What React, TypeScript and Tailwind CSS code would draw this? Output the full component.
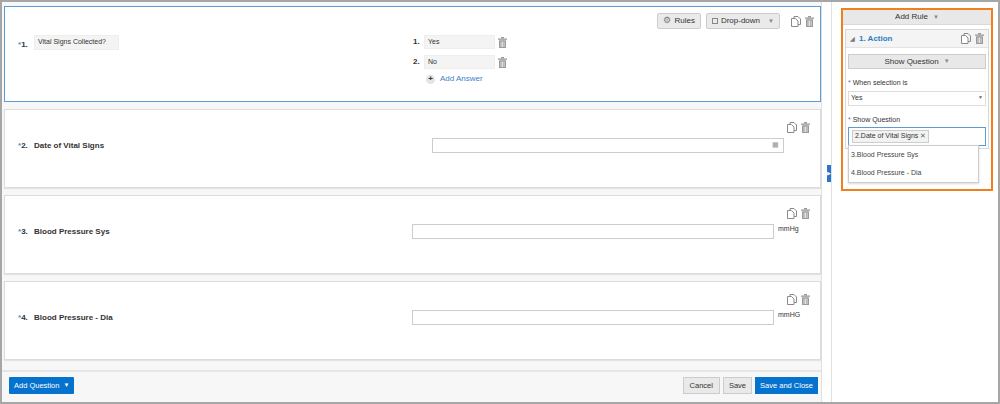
import React from "react";

const F = { fontFamily: "'Liberation Sans', Arial, sans-serif" };

function Trash({ c = "#9a9a9a" }: { c?: string }) {
  return (
    <svg width="9" height="11" viewBox="0 0 9 11">
      <rect x="0" y="1.5" width="9" height="1.3" fill={c} />
      <rect x="3" y="0" width="3" height="1.5" fill={c} />
      <rect x="1" y="3.3" width="7" height="7.7" rx="0.5" fill={c} />
      <rect x="2.7" y="4.5" width="0.7" height="5.5" fill="#fff" />
      <rect x="4.2" y="4.5" width="0.7" height="5.5" fill="#fff" />
      <rect x="5.7" y="4.5" width="0.7" height="5.5" fill="#fff" />
    </svg>
  );
}
function Copy() {
  return (
    <svg width="10" height="11" viewBox="0 0 10 11" fill="none" stroke="#8a8a8a" strokeWidth="1">
      <path d="M3 2.5V0.5h4l2.5 2.5v5.5H7" />
      <path d="M0.5 2.5h4l2.5 2.5v5.5H0.5z" fill="#fff" />
    </svg>
  );
}
function Icons() {
  return (
    <div className="flex items-center gap-[4px]">
      <Copy />
      <Trash />
    </div>
  );
}
function Caret() {
  return <span className="text-[6px] text-[#888] ml-[5px]">▼</span>;
}

function QCard({ n, label, top, unit }: { n: number; label: string; top: number; unit?: string }) {
  return (
    <div className="bg-white border border-[#dcdcdc] shadow-[0_1px_1px_rgba(0,0,0,0.08)] h-[79px] relative">
      <div className="absolute right-[10px] top-[12px]"><Icons /></div>
      <div className="flex items-center h-full pb-[6px]">
        <div className="w-[403px] flex items-center">
          <span className="text-[8px] text-[#333] ml-[13px] w-[16px] font-bold"><span className="text-[#4a90d9]">*</span>{n}.</span>
          <span className="text-[8px] font-bold text-[#333]">{label}</span>
        </div>
        <div className={`h-[15px] border border-[#ccc] bg-white flex items-center justify-end pr-1 ${top === 2 ? "ml-[24px] w-[352px]" : "ml-[4px] w-[362px]"}`}>
          {top === 2 && <span className="text-[7px] text-[#999]">▦</span>}
        </div>
        {unit && <span className="text-[7px] text-[#333] ml-[4px] self-center -mt-[4px]">{unit}</span>}
      </div>
    </div>
  );
}

export default function App() {
  return (
    <div style={F} className="w-[1000px] h-[404px] border-[2px] border-[#a6a6a6] bg-[#f5f5f5] flex overflow-hidden text-[#333]">
      <div className="w-[819px] flex flex-col bg-[#f7f7f7]">
        <div className="flex flex-col gap-[7px] pl-[2px] pr-0 pt-[4px]">
          <div className="bg-white border border-[#5b9bd9] h-[96px] relative">
            <div className="absolute right-[6px] top-[6px] flex items-center gap-[5px]">
              <div className="h-[16px] px-[5px] border border-[#ccc] bg-[#eaeaea] rounded-[2px] flex items-center text-[8px] gap-[3px]"><span className="text-[9px] text-[#777]">⚙</span>Rules</div>
              <div className="h-[16px] px-[5px] border border-[#ccc] bg-[#eaeaea] rounded-[2px] flex items-center text-[8px] gap-[3px]"><span className="inline-block w-[6px] h-[6px] border border-[#888]" />Drop-down<Caret /></div>
              <div className="ml-[6px]"><Icons /></div>
            </div>
            <div className="flex pt-[28px]">
              <div className="w-[408px] flex items-start">
                <span className="text-[8px] ml-[13px] w-[16px] mt-[4px] font-bold"><span className="text-[#4a90d9]">*</span>1.</span>
                <div className="w-[85px] h-[15px] bg-[#f4f4f4] border border-[#eee] text-[7px] flex items-center px-[3px]">Vital Signs Collected?</div>
              </div>
              <div className="flex flex-col gap-[6px]">
                {["Yes", "No"].map((a, i) => (
                  <div key={a} className="flex items-center">
                    <span className="text-[8px] font-bold w-[11px]">{i + 1}.</span>
                    <div className="w-[71px] h-[14px] bg-[#f4f4f4] border border-[#eee] text-[7px] flex items-center px-[3px]">{a}</div>
                    <span className="ml-[3px]"><Trash /></span>
                  </div>
                ))}
                <div className="flex items-center ml-[13px] -mt-[2px] gap-[5px]">
                  <span className="w-[9px] h-[9px] rounded-full bg-[#e4e4e4] flex items-center justify-center text-[8px] font-bold leading-none">+</span>
                  <span className="text-[8px] text-[#3c83c8]">Add Answer</span>
                </div>
              </div>
            </div>
          </div>
          <QCard n={2} label="Date of Vital Signs" top={2} />
          <QCard n={3} label="Blood Pressure Sys" top={3} unit="mmHg" />
          <QCard n={4} label="Blood Pressure - Dia" top={4} unit="mmHG" />
        </div>
        <div className="mt-[10px] border-t-[2px] border-[#e6e6e6] flex-1 flex items-start justify-between pt-[5px] pl-[7px] pr-[3px]">
          <div className="h-[17px] px-[5px] bg-[#0572ce] text-white text-[7.5px] flex items-center rounded-[1px]">Add Question <span className="text-[6px] ml-[4px]">▼</span></div>
          <div className="flex gap-[3px]">
            <div className="h-[17px] px-[6px] bg-[#e9e9e9] border border-[#ccc] text-[7.5px] flex items-center">Cancel</div>
            <div className="h-[17px] px-[5px] bg-[#e9e9e9] border border-[#ccc] text-[7.5px] flex items-center">Save</div>
            <div className="h-[17px] px-[5px] bg-[#0572ce] text-white text-[7.5px] flex items-center">Save and Close</div>
          </div>
        </div>
      </div>
      <div className="w-[10px] flex items-start pt-[163px] bg-white border-l border-[#e0e0e0]">
        <div className="w-[6px] h-[17px] bg-[#2b74d0] ml-[5px] flex items-center justify-center text-white text-[5px]">▶</div>
      </div>
      <div className="flex-1 bg-white border-l border-[#e0e0e0] pl-[9px] pt-[6px]">
        <div className="w-[152px] h-[183px] border-[2px] border-[#f07f20] relative">
          <div className="h-[15px] bg-[#e8e8e8] border-b border-[#d8d8d8] text-[8px] flex items-center justify-center">Add Rule<Caret /></div>
          <div className="mx-[2px] mt-[4px] border border-[#d8d8d8] h-[120px]">
            <div className="h-[18px] bg-[#f4f4f4] border-b border-[#e3e3e3] flex items-center justify-between px-[4px]">
              <span className="text-[8px] text-[#2a7dc4] font-bold"><span className="text-[6px] text-[#777] mr-[4px]">◢</span>1. Action</span>
              <Icons />
            </div>
            <div className="px-[2px] pt-[6px]">
              <div className="h-[15px] bg-[#e8e8e8] border border-[#ccc] text-[8px] flex items-center justify-center">Show Question<Caret /></div>
              <div className="text-[7px] mt-[9px]"><span className="text-[#2a7dc4]">*</span> When selection is</div>
              <div className="h-[15px] border border-[#ddd] mt-[2px] text-[7px] flex items-center justify-between px-[2px]">Yes<span className="text-[5px] text-[#666]">▼</span></div>
              <div className="text-[7px] mt-[9px]"><span className="text-[#2a7dc4]">*</span> Show Question</div>
              <div className="h-[19px] border border-[#5b9bd9] mt-[2px] flex items-center px-[3px]">
                <span className="border border-[#ccc] bg-[#f2f2f2] text-[7px] px-[2px] h-[13px] flex items-center">2.Date of Vital Signs <span className="ml-[2px] text-[#666]">✕</span></span>
              </div>
            </div>
          </div>
          <div className="absolute left-[5px] top-[135px] w-[131px] bg-white border border-[#ccc] shadow-[0_1px_2px_rgba(0,0,0,0.15)] text-[7px] text-[#444]">
            <div className="h-[18px] flex items-center px-[2px]">3.Blood Pressure Sys</div>
            <div className="h-[18px] flex items-center px-[2px]">4.Blood Pressure - Dia</div>
          </div>
        </div>
      </div>
    </div>
  );
}
